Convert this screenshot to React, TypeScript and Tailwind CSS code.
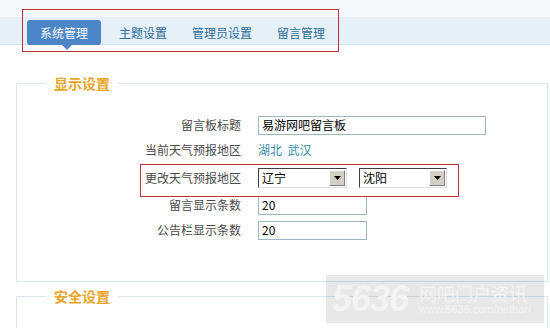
import React from "react";

const tabs = ["系统管理", "主题设置", "管理员设置", "留言管理"];

function FakeSelect({ value, width }: { value: string; width: string }) {
    return (
        <div className={`${width} h-[20px] flex items-stretch bg-white border border-t-[#404040] border-l-[#404040] border-r-[#e0e0e0] border-b-[#e0e0e0]`}>
            <div className="flex-1 flex items-center pl-[3px] text-[12px] text-black leading-none">{value}</div>
            <div className="w-[16px] m-[1px] flex items-center justify-center bg-[#d4d0c8] border border-t-white border-l-white border-r-[#808080] border-b-[#808080]">
                <svg width="7" height="4" viewBox="0 0 7 4">
                    <path d="M0 0h7L3.5 4z" fill="#000" />
                </svg>
            </div>
        </div>
    );
}

function Row({ label, children, h }: { label: string; children: React.ReactNode; h: string }) {
    return (
        <div className={`flex items-center ${h}`}>
            <div className="w-[224px] text-right text-[12px] text-[#4a4a4a]">{label}</div>
            <div className="ml-[17px] flex items-center gap-[12px]">{children}</div>
        </div>
    );
}

export default function App() {
    return (
        <div
            className="relative w-[550px] h-[328px] overflow-hidden bg-white"
            style={{ fontFamily: '"Noto Sans CJK SC", "Noto Sans", sans-serif' }}
        >
            {/* header with tabs */}
            <div className="relative h-[45px] border-b border-[#cfe0ee] bg-[linear-gradient(#f3f8fc_0,#f3f8fc_17px,#e5f0f9_17px,#e5f0f9_100%)]">
                <div className="flex items-start pl-[27px] pt-[20px]">
                    {tabs.map((t, i) =>
                        i === 0 ? (
                            <div key={t} className="relative h-[25px] w-[74px] rounded-[3px] bg-[#4c86c6] text-white text-[12px] flex items-center justify-center">
                                {t}
                                <div className="absolute left-[35px] top-[25px] w-0 h-0 border-l-[5px] border-r-[5px] border-t-[5px] border-l-transparent border-r-transparent border-t-[#4c86c6]" />
                            </div>
                        ) : (
                            <div key={t} className={`h-[25px] flex items-center text-[12px] text-[#2b6c98] ${i === 1 ? "ml-[18px]" : "ml-[25px]"}`}>
                                {t}
                            </div>
                        )
                    )}
                </div>
                <div className="absolute left-[22px] top-[9px] w-[317px] h-[43px] border border-[#c0303a]" />
            </div>

            {/* display settings */}
            <fieldset className="ml-[16px] mr-[2px] mt-[30px] h-[207px] border border-[#dbe7ef]">
                <legend className="ml-[29px] px-[8px] text-[14px] font-bold text-[#e8a428] leading-[16px]">显示设置</legend>
                <div className="pt-[22px]">
                    <Row label="留言板标题" h="h-[24px]">
                        <div className="w-[228px] h-[19px] border border-[#9bb7c4] flex items-center pl-[3px] text-[12px] text-black">易游网吧留言板</div>
                    </Row>
                    <Row label="当前天气预报地区" h="h-[25px]">
                        <span className="text-[12px] text-[#3a8fa3]">湖北&nbsp; 武汉</span>
                    </Row>
                    <Row label="更改天气预报地区" h="h-[31px]">
                        <FakeSelect value="辽宁" width="w-[89px]" />
                        <FakeSelect value="沈阳" width="w-[88px]" />
                    </Row>
                    <Row label="留言显示条数" h="h-[24px]">
                        <div className="w-[109px] h-[19px] border border-[#9bb7c4] flex items-center pl-[3px] text-[12px] text-black">20</div>
                    </Row>
                    <Row label="公告栏显示条数" h="h-[26px]">
                        <div className="w-[109px] h-[19px] border border-[#9bb7c4] flex items-center pl-[3px] text-[12px] text-black">20</div>
                    </Row>
                </div>
            </fieldset>

            {/* security settings */}
            <fieldset className="ml-[16px] mr-[2px] mt-[6px] h-[60px] border border-[#dbe7ef]">
                <legend className="ml-[29px] px-[8px] text-[14px] font-bold text-[#e8a428] leading-[16px]">安全设置</legend>
            </fieldset>

            {/* annotation box */}
            <div className="absolute left-[140px] top-[164px] w-[319px] h-[33px] border border-[#c0303a]" />

            {/* watermark */}
            <div className="absolute left-[326px] top-[275px] w-[218px] h-[48px] bg-[rgba(0,0,0,0.09)] flex items-center pl-[6px] gap-[11px]">
                <span className="text-[36px] font-bold italic text-[#f3f3f3] leading-none tracking-[-1px]" style={{ fontFamily: '"Liberation Sans", sans-serif' }}>5636</span>
                <div className="flex flex-col items-start">
                    <span className="text-[18px] leading-[20px] text-[#f3f3f3]">网吧门户资讯</span>
                    <span className="text-[11px] leading-[13px] text-[#f3f3f3]" style={{ fontFamily: '"Liberation Sans", sans-serif' }}>www.5636.com/nethar/</span>
                </div>
            </div>
        </div>
    );
}
